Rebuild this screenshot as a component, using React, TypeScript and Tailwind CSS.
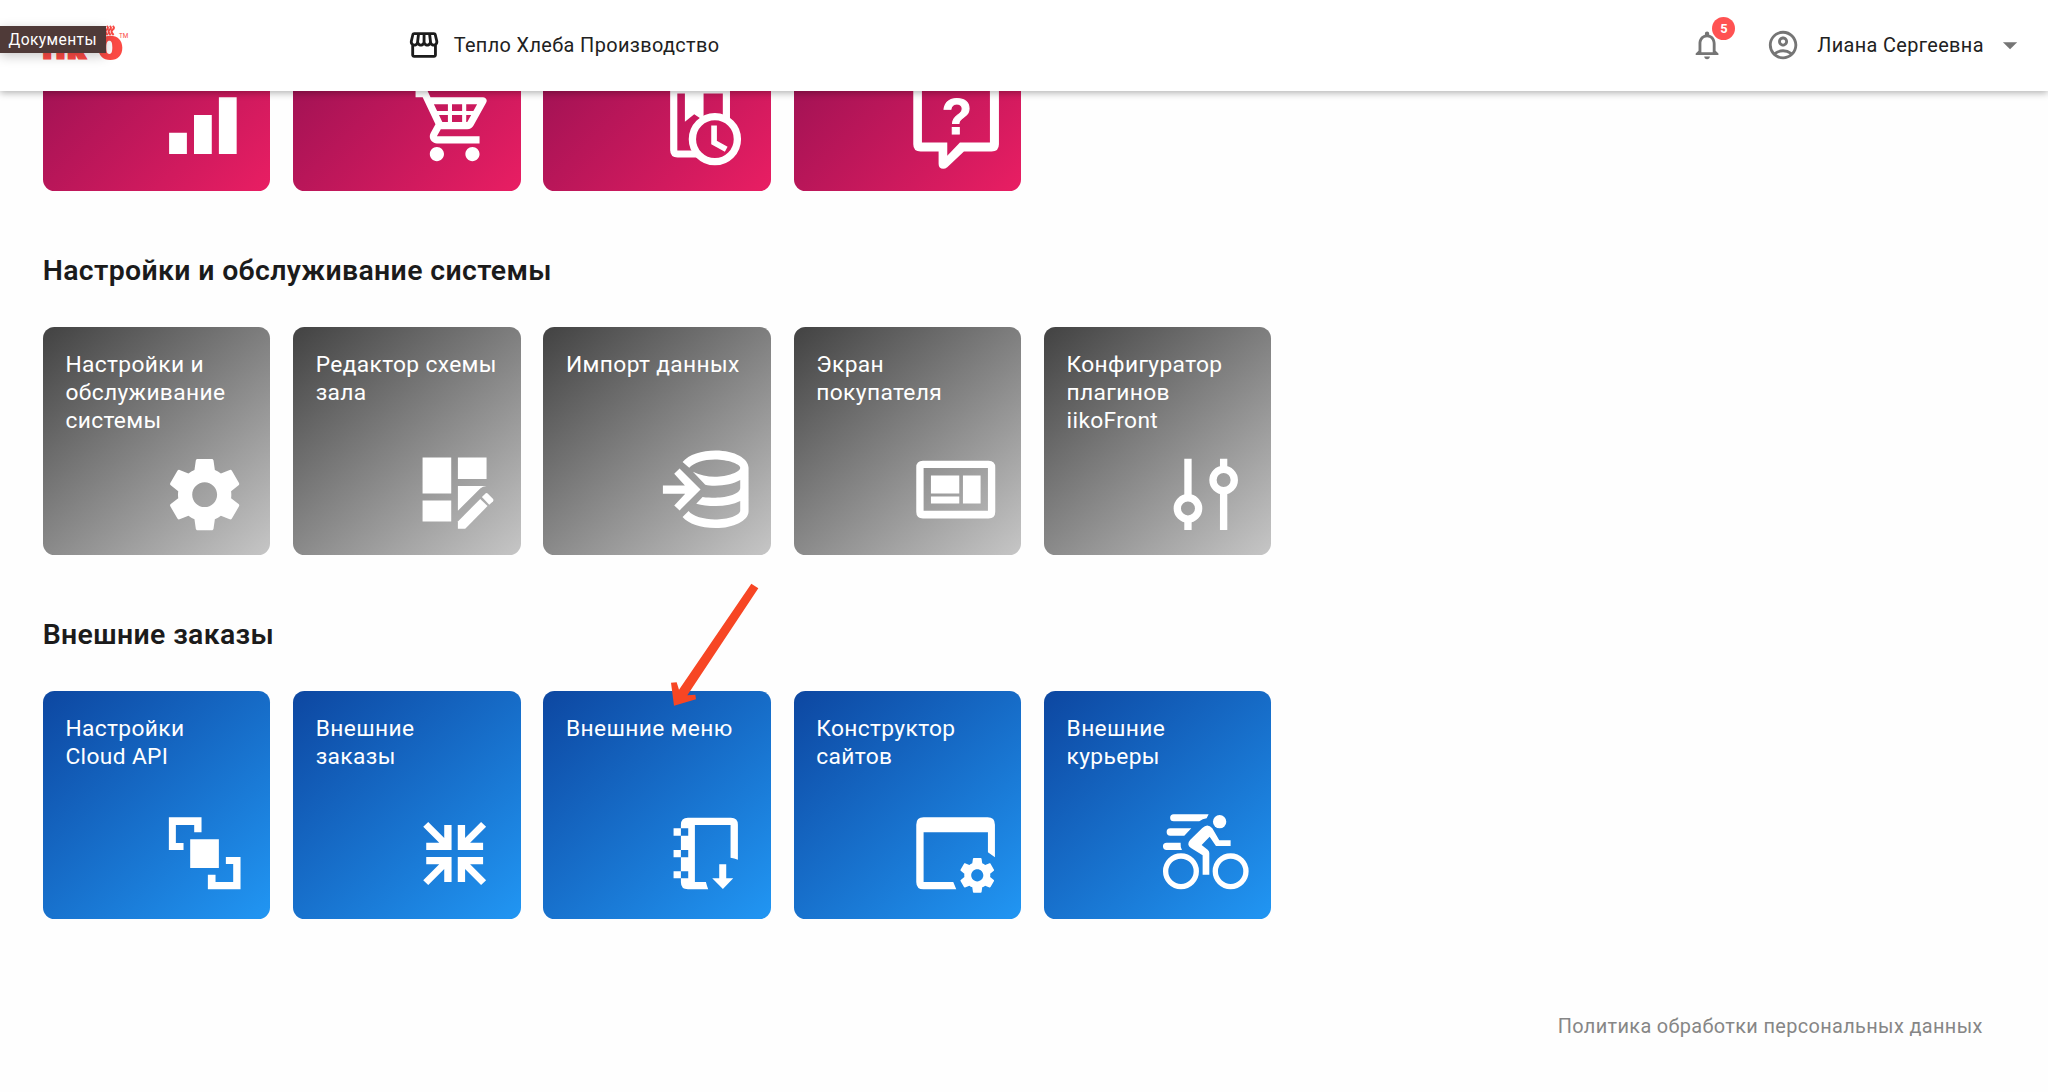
import type { ReactNode } from "react";
import {
  MdArrowDropDown,
  MdNotificationsNone,
  MdOutlineAccountCircle,
  MdOutlineStorefront,
} from "react-icons/md";

const GEAR =
  "M19.43 12.98c.04-.32.07-.64.07-.98s-.03-.66-.07-.98l2.11-1.65c.19-.15.24-.42.12-.64l-2-3.46c-.12-.22-.39-.3-.61-.22l-2.49 1c-.52-.4-1.08-.73-1.69-.98l-.38-2.65C14.46 2.18 14.25 2 14 2h-4c-.25 0-.46.18-.49.42l-.38 2.65c-.61.25-1.17.59-1.69.98l-2.49-1c-.23-.09-.49 0-.61.22l-2 3.46c-.13.22-.07.49.12.64l2.11 1.65c-.04.32-.07.65-.07.98s.03.66.07.98l-2.11 1.65c-.19.15-.24.42-.12.64l2 3.46c.12.22.39.3.61.22l2.49-1c.52.4 1.08.73 1.69.98l.38 2.65c.03.24.24.42.49.42h4c.25 0 .46-.18.49-.42l.38-2.65c.61-.25 1.17-.59 1.69-.98l2.49 1c.23.09.49 0 .61-.22l2-3.46c.12-.22.07-.49-.12-.64l-2.11-1.65zM12 15.5c-1.93 0-3.5-1.57-3.5-3.5s1.57-3.5 3.5-3.5 3.5 1.57 3.5 3.5-1.57 3.5-3.5 3.5z";

function Glyph({ box, children }: { box: string; children: ReactNode }) {
  return (
    <svg
      viewBox={box}
      fill="currentColor"
      className="block size-[85.33px] shrink-0 self-end overflow-visible text-white"
    >
      {children}
    </svg>
  );
}

const BarsIcon = () => (
  <Glyph box="0 0 24 24">
    <path d="M2 14h5v6H2zM9 9h5v11H9zM16 4h5v16h-5z" />
  </Glyph>
);

const CartIcon = () => (
  <Glyph box="0 0 24 24">
    <path d="M15.55 13c.75 0 1.41-.41 1.75-1.03l3.58-6.49A.996.996 0 0020.01 4H5.21l-.94-2H1v2h2l3.6 7.59-1.35 2.44C4.52 15.37 5.48 17 7 17h12v-2H7l1.1-2h7.45zM6.16 6h12.15l-2.76 5H8.53L6.16 6zM7 18c-1.1 0-1.99.9-1.99 2S5.9 22 7 22s2-.9 2-2-.9-2-2-2zm10 0c-1.1 0-1.99.9-1.99 2s.89 2 1.99 2 2-.9 2-2-.9-2-2-2z" />
    <path d="M10.1 5.5h1.15v6H10.1zM14.1 5.5h1.15v6H14.1zM6.6 7.85h11v1.15h-11z" />
  </Glyph>
);

const BookClockIcon = () => (
  <Glyph box="68.3 7.5 256 256">
    <path d="M100.500 211V28.500H258.500V115M100.500 208Q100.500 220.500 112 220.500H175" fill="none" stroke="currentColor" strokeWidth="21.500" />
    <path d="M134 28H190V120L162 101L134 124Z" />
    <circle cx="224" cy="176" r="67.500" fill="none" stroke="currentColor" strokeWidth="22" />
    <path d="M221.500 135V186L258 206" fill="none" stroke="currentColor" strokeWidth="17" />
  </Glyph>
);

const QuestionIcon = () => (
  <Glyph box="819.2 7.5 256 256">
    <path
      fillRule="evenodd"
      d="M820 -20H1077V191Q1077 213 1055 213H972L922 260Q916 265 910 265Q896 265 896 250V213H842Q820 213 820 191ZM846 0V186H922V226L960 186H1050V0Z"
    />
    <text
      x="951"
      y="161"
      textAnchor="middle"
      fontSize="148"
      fontWeight="700"
      fontFamily="Liberation Sans, sans-serif"
      stroke="currentColor"
      strokeWidth="3"
    >
      ?
    </text>
  </Glyph>
);

const SettingsIcon = () => (
  <Glyph box="0 0 24 24">
    <path d={GEAR} />
  </Glyph>
);

const LayoutEditIcon = () => (
  <Glyph box="1147.3 619.8 256 256">
    <path d="M1179 651H1265V759H1179ZM1285 651H1371V716H1285ZM1179 780H1265V843H1179Z" />
    <path d="M1285 737H1371Q1359 738 1352 744L1285 811Z" />
    <path d="M1285 843L1352 776L1374 797L1307 865H1285Z" />
    <path d="M1357 770L1367 760Q1371 756 1375 760L1390 775Q1394 779 1390 783L1379 793Z" />
  </Glyph>
);

const DatabaseImportIcon = () => (
  <Glyph box="68.3 49.8 256 256">
    <path d="M68 165H134L102 130L118 114L181 177L118 240L102 225L135 190H68Z" />
    <path d="M158 124C180 135 200 139 224 139C262 139 300 125 300 112C300 100 262 87 224 87C190 87 160 97 147 112L127 95C145 72 185 60 226 60C285 60 325 85 325 112V243C325 270 280 293 226 293C180 293 145 280 127 260L145 242C158 258 190 267 224 267C262 267 300 255 300 240V212C280 222 255 227 226 227C203 227 185 225 168 220L187 200C200 202 210 202 226 202C262 202 300 190 300 173V149C280 160 255 166 224 166C212 166 203 165 195 163Z" />
  </Glyph>
);

const ScreenIcon = () => (
  <Glyph box="819.2 49.8 256 256">
    <path
      fillRule="evenodd"
      d="M849 91H1046Q1066 91 1066 111V244Q1066 264 1046 264H849Q829 264 829 244V111Q829 91 849 91ZM851 113V241H1044V113Z"
    />
    <path d="M873 135H958V189H873ZM873 198H958V219H873ZM969 135H1022V219H969Z" />
  </Glyph>
);

const SlidersIcon = () => (
  <Glyph box="370.1 396.8 256 256">
    <g fill="none" stroke="currentColor" strokeWidth="22">
      <path d="M445 417V534M445 598V631M552 417V449M552 513V631" />
      <circle cx="445" cy="566" r="32" />
      <circle cx="552" cy="481" r="32" />
    </g>
  </Glyph>
);

const CloudApiIcon = () => (
  <Glyph box="396.4 602 256 256">
    <path d="M417 621H515V666H493V644H438V698H461V719H417ZM481 687H567V773H481ZM588 740H632V837H534V793H557V815H610V761H588Z" />
  </Glyph>
);

const COLLAPSE_ARROW = "M1181 649L1196 635L1244 683V644H1266V719H1190V697H1229Z";
const CollapseIcon = () => (
  <Glyph box="1147.3 602 256 256">
    <path d={COLLAPSE_ARROW} />
    <path d={COLLAPSE_ARROW} transform="translate(2550.600 0) scale(-1 1)" />
    <path d={COLLAPSE_ARROW} transform="translate(0 1459) scale(1 -1)" />
    <path d={COLLAPSE_ARROW} transform="translate(2550.600 1459) scale(-1 -1)" />
  </Glyph>
);

const MenuBookIcon = () => (
  <Glyph box="398.3 722 256 256">
    <path
      fillRule="evenodd"
      d="M473 742H602Q623 742 623 763V868Q612 864 601 862V764H494V935H527Q530 947 534 957H473Q452 957 452 936V924H474V903H452V861H474V839H452V796H474V774H452V763Q452 742 473 742Z"
    />
    <path d="M430 774H452V796H430ZM430 839H452V861H430ZM430 903H452V924H430Z" />
    <path d="M567 882H588V924H609L578 956L546 924H567Z" />
  </Glyph>
);

const SiteBuilderIcon = () => (
  <Glyph box="369.2 392 256 256">
    <path d="M401 411H593Q615 411 615 433V531L594 516V456H401V605H490L499 627H401Q379 627 379 605V433Q379 411 401 411Z" />
    <path d={GEAR} transform="translate(499.600 522.600) scale(5.200)" />
  </Glyph>
);

const CourierIcon = () => (
  <Glyph box="1120.1 392 256 256">
    <g fill="none" stroke="currentColor" strokeWidth="16">
      <circle cx="1174" cy="573" r="46" />
      <circle cx="1323" cy="573" r="46" />
    </g>
    <circle cx="1290" cy="424" r="20" />
    <path d="M1152 402H1257L1251 414Q1239 415 1229 423H1152A10.500 10.500 0 0 1 1152 402ZM1142 444H1205L1184 466H1142A11 11 0 0 1 1142 444ZM1131 487H1173Q1172 499 1177 509H1131A11 11 0 0 1 1131 487Z" />
    <path d="M1196 492Q1196 484 1202 478L1238 443Q1254 427 1268 444L1289 480H1323V497H1279L1260 469L1236 494L1254 508Q1259 512 1259 518V583H1239V525L1204 503Q1196 498 1196 492Z" />
  </Glyph>
);

const PointerArrow = () => (
  <svg
    viewBox="420 30 270 380"
    className="absolute -top-[111.2px] left-[126.7px] h-[126.67px] w-[90px] overflow-visible"
  >
    <path d="M664 41L685 55L472 376L496 374L498 388L432 407L423 338L440 337L447 359Z" fill="#f74624" />
  </svg>
);

const TONES = {
  pink: "bg-[linear-gradient(135deg,#880e4f,#e91e63)]",
  gray: "bg-[linear-gradient(140deg,#424242,#c6c6c6)]",
  blue: "bg-[linear-gradient(140deg,#0d47a1,#2196f3)]",
};

interface TileProps {
  tone: keyof typeof TONES;
  title?: string[];
  icon: ReactNode;
  children?: ReactNode;
}

function Tile({ tone, title = [], icon, children }: TileProps) {
  return (
    <div
      className={`relative flex size-[227.55px] shrink-0 flex-col justify-between gap-[16.3px] rounded-[11.4px] p-[22.75px] pt-[23.5px] ${TONES[tone]}`}
    >
      <div className="shrink-0 text-[22.75px] leading-[28.44px] tracking-[0.36px] whitespace-nowrap text-white">
        {title.map((line) => (
          <div key={line}>{line}</div>
        ))}
      </div>
      {icon}
      {children}
    </div>
  );
}

function Section({ title, children }: { title: string; children: ReactNode }) {
  return (
    <section className="h-[364.1px]">
      <h2 className="pt-[63px] pb-[39.5px] text-[28.44px] leading-[34px] font-semibold tracking-[0.36px] text-[#1b1b1b]">
        {title}
      </h2>
      <div className="flex gap-[22.76px]">{children}</div>
    </section>
  );
}

function Logo() {
  return (
    <svg viewBox="0 0 300 200" className="absolute top-0 left-0 h-[66.67px] w-[100px] overflow-visible" fill="#fb4a44">
      <text
        x="129 169 203"
        y="173"
        fontSize="92"
        fontWeight="900"
        fontFamily="Roboto, sans-serif"
        stroke="#fb4a44"
        strokeWidth="9"
      >
        iik
      </text>
      <path
        fillRule="evenodd"
        d="M331 107C353 107 367 121 367 143C367 166 353 180 331 180C309 180 295 166 295 143C295 121 309 107 331 107ZM328 122C321 122 319 130 319 142C319 155 321 162 328 162C335 162 337 155 337 142C337 130 335 122 328 122Z"
      />
      <path
        d="M320 78q8 5 0 11t3 16M329 78q8 5 0 11t3 16M338 78q8 5 0 11t3 16"
        fill="none"
        stroke="#fb4a44"
        strokeWidth="6"
      />
      <text x="357" y="113" fontSize="19" fontFamily="Roboto, sans-serif">
        TM
      </text>
    </svg>
  );
}

function Header() {
  return (
    <header className="relative z-10 flex h-[91px] items-center bg-white text-[19.9px] tracking-[0.36px] text-[#212121] shadow-[0_2px_7px_rgba(0,0,0,0.3)]">
      <div className="w-[407px] shrink-0">
        <Logo />
        <div className="absolute top-[26px] left-0 flex h-[26.7px] w-[106px] items-center bg-[#4f3a38] pl-[8.5px] text-[15.6px] tracking-[0.4px] text-white shadow-[0_3px_12px_rgba(0,0,0,0.22)]">
          <span className="relative top-px">Документы</span>
        </div>
      </div>
      <MdOutlineStorefront className="size-[34.13px] text-[#1c1c1c]" />
      <span className="ml-[12.5px]">Тепло Хлеба Производство</span>
      <div className="ml-auto flex items-center pr-[21px]">
        <div className="relative mr-[42.5px]">
          <MdNotificationsNone className="size-[34.13px] text-[#757575]" />
          <span className="absolute -top-[11.5px] left-[22.8px] flex size-[23px] items-center justify-center rounded-full bg-[#ff5252] text-[12.8px] font-bold tracking-normal text-white">
            5
          </span>
        </div>
        <MdOutlineAccountCircle className="mr-[17px] size-[34.13px] text-[#757575]" />
        <span>Лиана Сергеевна</span>
        <MdArrowDropDown className="ml-[9px] size-[34.13px] text-[#757575]" />
      </div>
    </header>
  );
}

export default function App() {
  return (
    <div className="flex h-[1092px] w-[2048px] flex-col overflow-hidden bg-[#fefefe] font-[Roboto,sans-serif]">
      <Header />
      <main className="flex grow flex-col px-[42.67px]">
        <div className="flex h-[99.6px] items-end gap-[22.76px] overflow-hidden">
          <Tile tone="pink" icon={<BarsIcon />} />
          <Tile tone="pink" icon={<CartIcon />} />
          <Tile tone="pink" icon={<BookClockIcon />} />
          <Tile tone="pink" icon={<QuestionIcon />} />
        </div>
        <Section title="Настройки и обслуживание системы">
          <Tile tone="gray" title={["Настройки и", "обслуживание", "системы"]} icon={<SettingsIcon />} />
          <Tile tone="gray" title={["Редактор схемы", "зала"]} icon={<LayoutEditIcon />} />
          <Tile tone="gray" title={["Импорт данных"]} icon={<DatabaseImportIcon />} />
          <Tile tone="gray" title={["Экран", "покупателя"]} icon={<ScreenIcon />} />
          <Tile tone="gray" title={["Конфигуратор", "плагинов", "iikoFront"]} icon={<SlidersIcon />} />
        </Section>
        <Section title="Внешние заказы">
          <Tile tone="blue" title={["Настройки", "Cloud API"]} icon={<CloudApiIcon />} />
          <Tile tone="blue" title={["Внешние", "заказы"]} icon={<CollapseIcon />} />
          <Tile tone="blue" title={["Внешние меню"]} icon={<MenuBookIcon />}>
            <PointerArrow />
          </Tile>
          <Tile tone="blue" title={["Конструктор", "сайтов"]} icon={<SiteBuilderIcon />} />
          <Tile tone="blue" title={["Внешние", "курьеры"]} icon={<CourierIcon />} />
        </Section>
        <footer className="mt-auto flex justify-end pr-[22.7px] pb-[50.3px] text-[19.9px] leading-[28.44px] tracking-[0.36px] text-[#868686]">
          Политика обработки персональных данных
        </footer>
      </main>
    </div>
  );
}
